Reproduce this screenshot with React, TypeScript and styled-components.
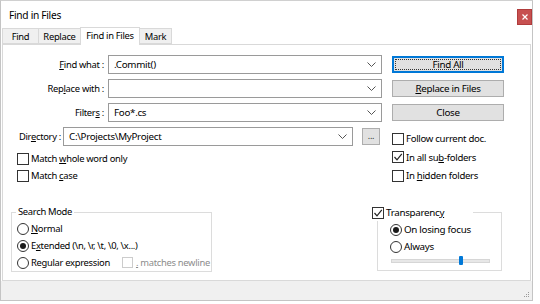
import styled, { createGlobalStyle } from "styled-components";
import { ReactNode } from "react";

const GlobalStyle = createGlobalStyle`
  html, body {
    margin: 0;
    padding: 0;
    background: #ffffff;
  }
  body {
    font-family: "Noto Sans", "Segoe UI", sans-serif;
    font-size: 9.4px;
    letter-spacing: -0.3px;
    color: #000;
  }
  * {
    box-sizing: border-box;
  }
`;

function Check({ checked, children }: { checked?: boolean; children: ReactNode }) {
  return (
    <CheckRow>
      <CheckBox>
        {checked && (
          <svg width="10" height="10" viewBox="0 0 10 10">
            <path d="M1.5 5 L4 7.8 L8.8 1.8" fill="none" stroke="#222" strokeWidth="1.2" />
          </svg>
        )}
      </CheckBox>
      <span>{children}</span>
    </CheckRow>
  );
}

function Radio({ checked, children }: { checked?: boolean; children: ReactNode }) {
  return (
    <RadioRow>
      <RadioCircle $checked={checked} />
      <span>{children}</span>
    </RadioRow>
  );
}

function Combo({ value, width }: { value?: string; width: number }) {
  return (
    <ComboBox style={{ width }}>
      <span>{value}</span>
      <svg width="9" height="5" viewBox="0 0 9 5">
        <path d="M0.5 0.5 L4.5 4.5 L8.5 0.5" fill="none" stroke="#555" strokeWidth="1" />
      </svg>
    </ComboBox>
  );
}

function App() {
  return (
    <>
      <GlobalStyle />
      <Window>
        <TitleBar>
          <Title>Find in Files</Title>
          <CloseButton>
            <svg width="6" height="6" viewBox="0 0 6 6">
              <path d="M0.5 0.5 L5.5 5.5 M5.5 0.5 L0.5 5.5" stroke="#fff" strokeWidth="1.2" />
            </svg>
          </CloseButton>
        </TitleBar>

        <TabStrip>
          <Tab $w={37}>Find</Tab>
          <Tab $w={43}>Replace</Tab>
          <Tab $w={60} $active>
            Find in Files
          </Tab>
          <Tab $w={33}>Mark</Tab>
        </TabStrip>

        <Panel>
          <TopSection>
            <LeftCol>
              <FieldRow>
                <FieldLabel>
                  <u>F</u>ind what :
                </FieldLabel>
                <Combo value=".Commit()" width={274} />
              </FieldRow>
              <FieldRow>
                <FieldLabel>
                  Rep<u>l</u>ace with :
                </FieldLabel>
                <Combo width={274} />
              </FieldRow>
              <FieldRow>
                <FieldLabel>
                  Filter<u>s</u> :
                </FieldLabel>
                <Combo value="Foo*.cs" width={274} />
              </FieldRow>
              <FieldRow $narrow>
                <FieldLabel>
                  Dir<u>e</u>ctory :
                </FieldLabel>
                <Combo value="C:\Projects\MyProject" width={290} />
                <DotsButton>...</DotsButton>
              </FieldRow>
              <LeftChecks>
                <Check>
                  Match <u>w</u>hole word only
                </Check>
                <Check>
                  Match <u>c</u>ase
                </Check>
              </LeftChecks>
            </LeftCol>

            <RightCol>
              <Button $default>Find All</Button>
              <Button>
                <u>R</u>eplace in Files
              </Button>
              <Button>Close</Button>
              <RightChecks>
                <Check>Follow current doc.</Check>
                <Check checked>
                  In all su<u>b</u>-folders
                </Check>
                <Check>
                  In <u>h</u>idden folders
                </Check>
              </RightChecks>
            </RightCol>
          </TopSection>

          <BottomSection>
            <SearchGroup>
              <GroupLegend>Search Mode</GroupLegend>
              <Radio>
                <u>N</u>ormal
              </Radio>
              <Radio checked>
                E<u>x</u>tended (\n, \r, \t, \0, \x...)
              </Radio>
              <RadioLine>
                <Radio>Regular expression</Radio>
                <DisabledCheck>
                  <DisabledBox />
                  <span>
                    <u>.</u> matches newline
                  </span>
                </DisabledCheck>
              </RadioLine>
            </SearchGroup>

            <TransparencyGroup>
              <CheckLegend>
                <Check checked>
                  Transparenc<u>y</u>
                </Check>
              </CheckLegend>
              <Radio checked>On losing focus</Radio>
              <Radio>Always</Radio>
              <SliderRow>
                <SliderTrack>
                  <SliderThumb style={{ left: "69%" }} />
                </SliderTrack>
              </SliderRow>
            </TransparencyGroup>
          </BottomSection>
        </Panel>

        <StatusBar>
          <svg width="6" height="6" viewBox="0 0 6 6">
            <rect x="4" y="0" width="1" height="1" fill="#9a9a9a" />
            <rect x="2" y="2" width="1" height="1" fill="#9a9a9a" />
            <rect x="4" y="2" width="1" height="1" fill="#9a9a9a" />
            <rect x="0" y="4" width="1" height="1" fill="#9a9a9a" />
            <rect x="2" y="4" width="1" height="1" fill="#9a9a9a" />
            <rect x="4" y="4" width="1" height="1" fill="#9a9a9a" />
          </svg>
        </StatusBar>
      </Window>
    </>
  );
}

const Window = styled.div`
  width: 533px;
  height: 301px;
  border: 1px solid #c4c4c4;
  border-top-color: #d0d0d0;
  background: #ffffff;
  display: flex;
  flex-direction: column;
`;

const TitleBar = styled.div`
  height: 26px;
  display: flex;
  align-items: center;
  justify-content: space-between;
  padding: 0 0 0 8px;
`;

const Title = styled.div`
  font-size: 10.2px;
  margin-top: 2px;
`;

const CloseButton = styled.div`
  width: 15px;
  height: 16px;
  margin-top: 6px;
  background: #c75050;
  border: 1px solid #b03c3c;
  display: flex;
  align-items: center;
  justify-content: center;
`;

const TabStrip = styled.div`
  height: 17px;
  display: flex;
  align-items: flex-end;
  padding-left: 1px;
  position: relative;
  z-index: 1;
`;

const Tab = styled.div<{ $active?: boolean; $w: number }>`
  width: ${({ $w }) => $w}px;
  height: ${({ $active }) => ($active ? "18px" : "16px")};
  margin-bottom: ${({ $active }) => ($active ? "-1px" : "0")};
  display: flex;
  align-items: center;
  justify-content: center;
  white-space: nowrap;
  background: ${({ $active }) => ($active ? "#ffffff" : "#f0f0f0")};
  border: 1px solid #d9d9d9;
  border-bottom: ${({ $active }) => ($active ? "none" : "1px solid #d9d9d9")};
  margin-right: -1px;
  padding-bottom: ${({ $active }) => ($active ? "2px" : "0")};
`;

const Panel = styled.div`
  flex: 1;
  margin: 0 1px 0 1px;
  border: 1px solid #d9d9d9;
  background: #ffffff;
  display: flex;
  flex-direction: column;
  padding: 10px 0 8px 0;
`;

const TopSection = styled.div`
  display: flex;
  gap: 10px;
`;

const LeftCol = styled.div`
  width: 379px;
  display: flex;
  flex-direction: column;
  gap: 5px;
`;

const FieldRow = styled.div<{ $narrow?: boolean }>`
  height: 19px;
  display: flex;
  align-items: center;
  justify-content: flex-end;
  padding-right: ${({ $narrow }) => ($narrow ? "2px" : "0")};
  gap: ${({ $narrow }) => ($narrow ? "9px" : "4px")};

  & > span:first-child {
    margin-right: ${({ $narrow }) => ($narrow ? "-7px" : "0")};
  }
`;

const FieldLabel = styled.span`
  white-space: nowrap;
`;

const ComboBox = styled.div`
  height: 19px;
  border: 1px solid #9a9a9a;
  background: #ffffff;
  display: flex;
  align-items: center;
  justify-content: space-between;
  padding: 0 5px 0 5px;
  font-size: 9.8px;
`;

const DotsButton = styled.div`
  width: 18px;
  height: 17px;
  background: #e1e1e1;
  border: 1px solid #adadad;
  display: flex;
  align-items: center;
  justify-content: center;
  font-size: 9px;
  line-height: 1;
  padding-bottom: 2px;
  color: #333;
`;

const LeftChecks = styled.div`
  margin-top: -1px;
  padding-left: 14px;
  display: flex;
  flex-direction: column;
`;

const CheckRow = styled.div`
  height: 17px;
  display: flex;
  align-items: center;
  gap: 2px;
  white-space: nowrap;
`;

const CheckBox = styled.span`
  width: 12px;
  height: 12px;
  border: 1px solid #333333;
  background: #ffffff;
  display: flex;
  align-items: center;
  justify-content: center;
  flex-shrink: 0;
`;

const RightCol = styled.div`
  width: 112px;
  padding-top: 1px;
  display: flex;
  flex-direction: column;
  gap: 7px;
`;

const Button = styled.div<{ $default?: boolean }>`
  height: 17px;
  background: #e1e1e1;
  border: 1px solid ${({ $default }) => ($default ? "#0078d7" : "#adadad")};
  box-shadow: ${({ $default }) => ($default ? "inset 0 0 0 1px #0078d7" : "none")};
  outline: ${({ $default }) => ($default ? "1px dotted #333" : "none")};
  outline-offset: -4px;
  display: flex;
  align-items: center;
  justify-content: center;
  font-size: 9.8px;
`;

const RightChecks = styled.div`
  margin-top: 2px;
  display: flex;
  flex-direction: column;
  gap: 1.5px;
  font-size: 9.6px;
`;

const BottomSection = styled.div`
  margin-top: auto;
  display: flex;
  justify-content: space-between;
  align-items: flex-end;
  padding: 0 28px 0 8px;
`;

const SearchGroup = styled.fieldset`
  width: 201px;
  margin: 0;
  padding: 0 0 0 5px;
  border: 1px solid #dcdcdc;
  display: flex;
  flex-direction: column;
`;

const GroupLegend = styled.legend`
  padding: 0 2px;
  margin-left: -1px;
  line-height: 16px;
`;

const RadioRow = styled.div`
  height: 17px;
  display: flex;
  align-items: center;
  gap: 2px;
  white-space: nowrap;
`;

const RadioCircle = styled.span<{ $checked?: boolean }>`
  width: 12px;
  height: 12px;
  border-radius: 50%;
  border: 1px solid #333333;
  background: #ffffff;
  display: flex;
  align-items: center;
  justify-content: center;
  flex-shrink: 0;

  &::after {
    content: "";
    width: 6px;
    height: 6px;
    border-radius: 50%;
    background: ${({ $checked }) => ($checked ? "#1a1a1a" : "transparent")};
  }
`;

const RadioLine = styled.div`
  display: flex;
  align-items: center;
  gap: 12px;
`;

const DisabledCheck = styled.div`
  display: flex;
  align-items: center;
  gap: 3px;
  color: #8c8c8c;
  white-space: nowrap;
`;

const DisabledBox = styled.span`
  width: 11px;
  height: 11px;
  border: 1px solid #cccccc;
`;

const TransparencyGroup = styled.fieldset`
  width: 125px;
  margin: 0 0 1px 0;
  padding: 0 0 3px 12px;
  border: 1px solid #dcdcdc;
  display: flex;
  flex-direction: column;
  font-size: 9.8px;
`;

const CheckLegend = styled.legend`
  width: 101px;
  padding: 0;
  margin-left: -18px;
  line-height: 16px;
  background: transparent;
`;

const SliderRow = styled.div`
  height: 12px;
  display: flex;
  align-items: center;
`;

const SliderTrack = styled.div`
  width: 99px;
  height: 4px;
  margin-left: 1px;
  background: #e7e7e7;
  border: 1px solid #d6d6d6;
  position: relative;
`;

const SliderThumb = styled.div`
  position: absolute;
  top: -4px;
  width: 4px;
  height: 9px;
  background: #0078d7;
  border-radius: 1px;
`;

const StatusBar = styled.div`
  height: 19px;
  background: #f0f0f0;
  display: flex;
  justify-content: flex-end;
  align-items: flex-end;
  padding: 0 2px 2px 0;
`;

export default App;
